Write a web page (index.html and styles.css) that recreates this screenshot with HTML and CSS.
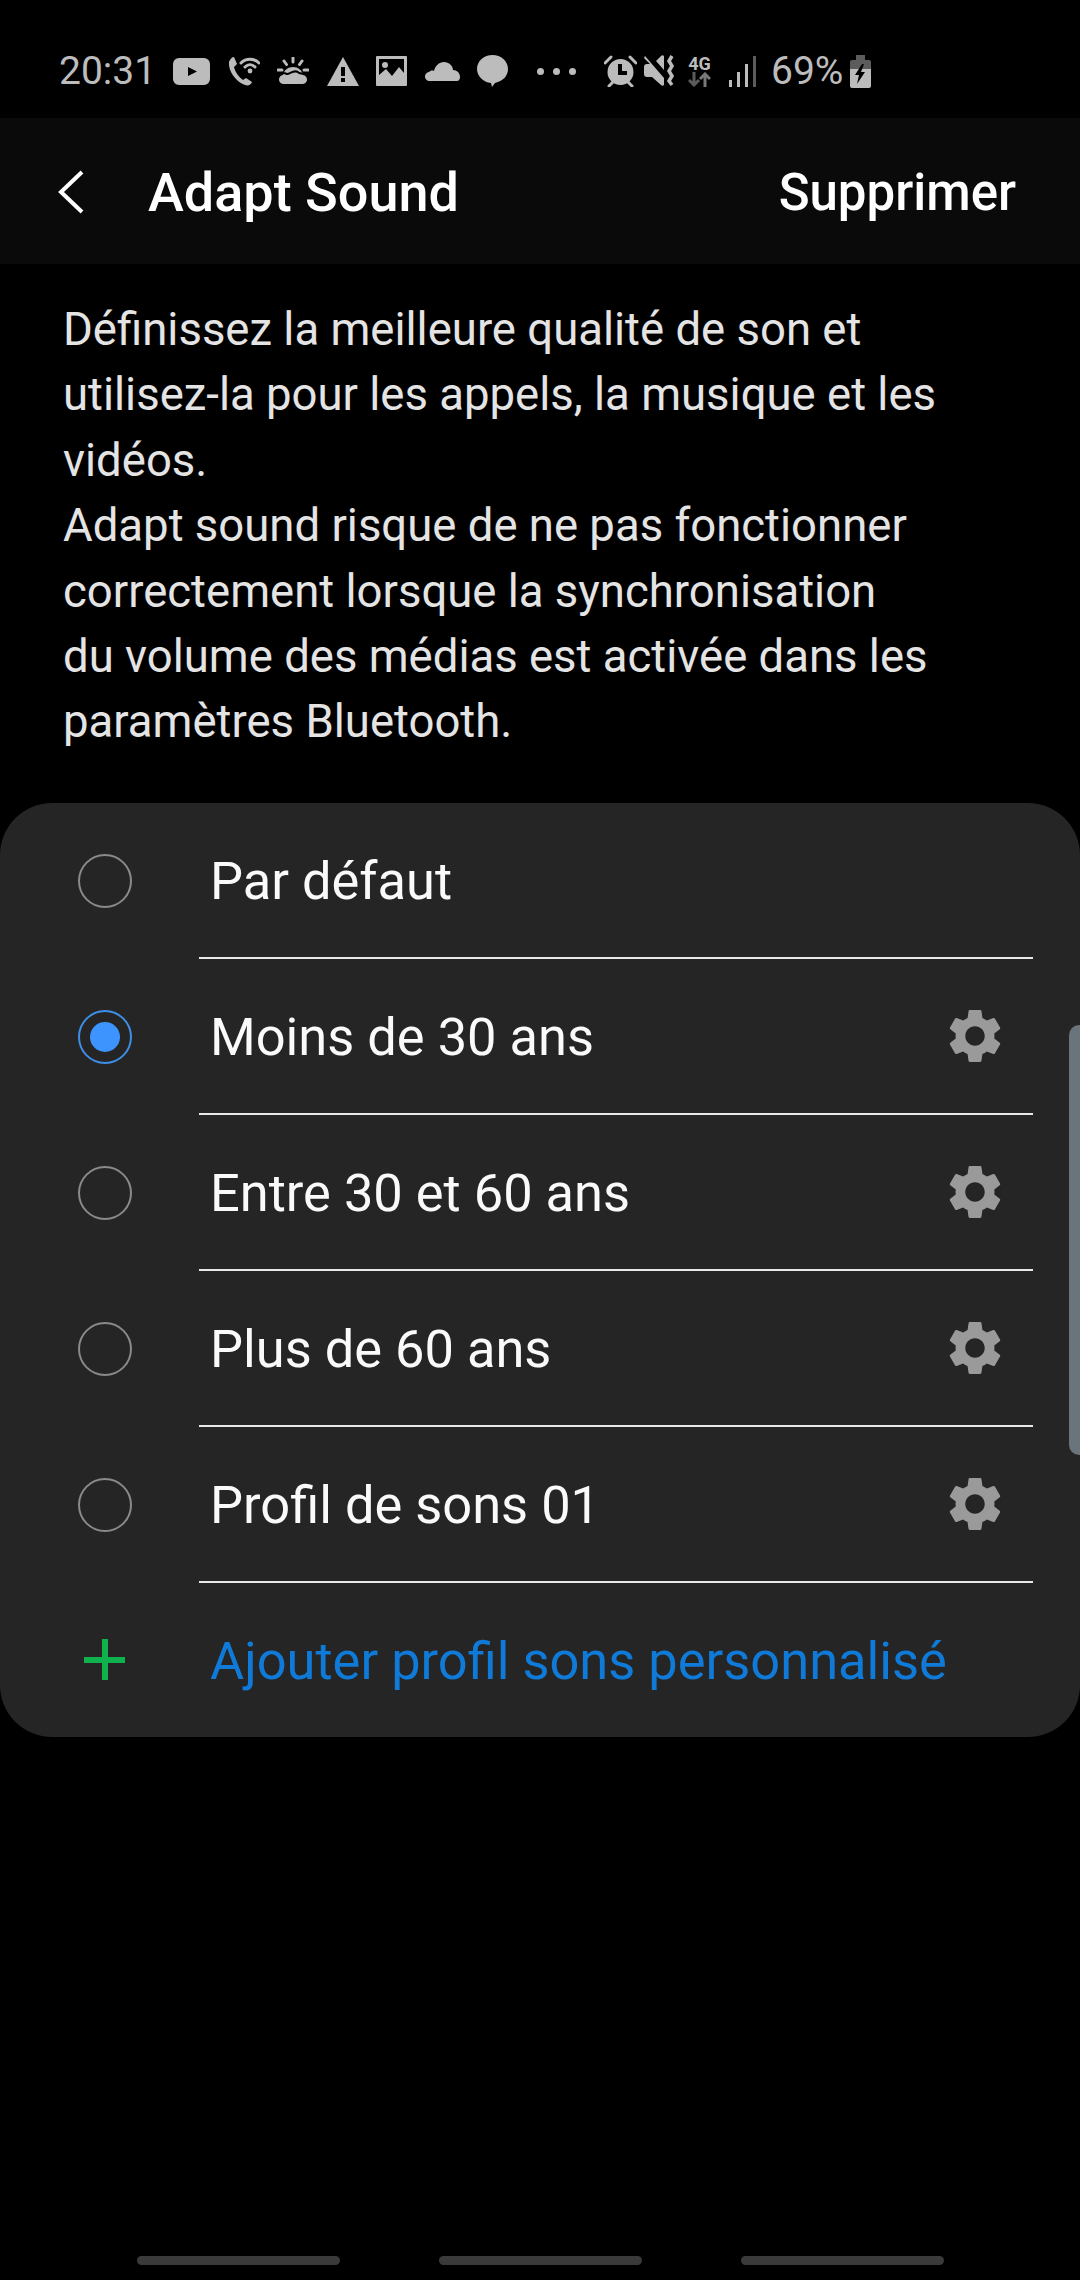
FILE: index.html
```html
<!DOCTYPE html>
<html>
  <head>
    <meta charset="utf-8">
    <title>Adapt Sound</title>
    <link rel="stylesheet" href="styles.css">
  </head>
  <body>
    <svg class="defs" width="0" height="0">
      <symbol id="gear" viewBox="2.6 2 18.8 20">
        <path d="M19.14 12.94c.04-.3.06-.61.06-.94 0-.32-.02-.64-.07-.94l2.03-1.58c.18-.14.23-.41.12-.61l-1.92-3.32c-.12-.22-.37-.29-.59-.22l-2.39.96c-.5-.38-1.03-.7-1.62-.94l-.36-2.54c-.04-.24-.24-.41-.48-.41h-3.84c-.24 0-.43.17-.47.41l-.36 2.54c-.59.24-1.13.57-1.62.94l-2.39-.96c-.22-.08-.47 0-.59.22L2.74 8.87c-.12.21-.08.47.12.61l2.03 1.58c-.05.3-.09.63-.09.94s.02.64.07.94l-2.03 1.58c-.18.14-.23.41-.12.61l1.92 3.32c.12.22.37.29.59.22l2.39-.96c.5.38 1.03.7 1.62.94l.36 2.54c.05.24.24.41.48.41h3.84c.24 0 .44-.17.47-.41l.36-2.54c.59-.24 1.13-.56 1.62-.94l2.39.96c.22.08.47 0 .59-.22l1.92-3.32c.12-.22.07-.47-.12-.61l-2.01-1.58zM12 15.6c-1.98 0-3.6-1.62-3.6-3.6s1.62-3.6 3.6-3.6 3.6 1.62 3.6 3.6-1.62 3.6-3.6 3.6z"/>
      </symbol>
    </svg>

    <div class="status-bar">
      <span class="status-time">20:31</span>
      <div class="status-left">
        <svg width="37" height="27" viewBox="0 0 37 27">
          <path fill-rule="evenodd" d="M6 0h25a6 6 0 0 1 6 6v15a6 6 0 0 1-6 6H6a6 6 0 0 1-6-6V6a6 6 0 0 1 6-6zM15 9v9l9-4.5z"/>
        </svg>
        <svg width="32" height="30" viewBox="0 0 32 30">
          <path d="M1 6c1-3 3-5 5-5l3 7-3 3c1 5 5 10 9 13l3-2 6 4c-1 3-4 4-7 3C8 26 0 15 1 6z"/>
          <g class="wave">
            <path d="M13 7c5-5 13-5 18 0"/>
            <path d="M17 11c3-3 7-3 10 0"/>
          </g>
          <circle cx="22" cy="15" r="2.4"/>
        </svg>
        <svg width="32" height="28" viewBox="0 0 32 28">
          <path d="M7 27a4.500 4.500 0 0 1-1-9c1-5 5-8 10-8s9 3 10 8a4.500 4.500 0 0 1-1 9z"/>
          <path class="notch" d="M1 17c5-2 7-1 9 0s8-6 12-1c3 1 6 1 9 1" />
          <g class="ray">
            <path d="M16 1v4M7 4l2.500 3.500M25 4l-2.500 3.500M1 13h4M27 13h4"/>
          </g>
        </svg>
        <svg width="32" height="29" viewBox="0 0 32 29">
          <path d="M16 0 32 29H0z"/>
          <rect class="cut" x="14" y="10" width="4" height="9"/>
          <rect class="cut" x="14" y="21" width="4" height="4"/>
        </svg>
        <svg width="31" height="30" viewBox="0 0 31 30">
          <path fill-rule="evenodd" d="M1 0h29a1 1 0 0 1 1 1v28a1 1 0 0 1-1 1H1a1 1 0 0 1-1-1V1a1 1 0 0 1 1-1zM3 3v16l7-6 6 7 7-9 5 6V3z"/>
          <circle cx="9" cy="9" r="3"/>
        </svg>
        <svg width="35" height="19" viewBox="0 0 35 19">
          <path d="M5 19a4.500 4.500 0 0 1-1-9c1-1 3-2 5-1 1-5 5-9 10-9 5 0 9 4 9 8 4 0 7 3 7 7 0 2-1 4-3 4z"/>
        </svg>
        <svg width="31" height="32" viewBox="0 0 31 32">
          <path d="M15.500 0C24 0 31 6 31 14c0 7-5 12-13 14l-3 4-1-4C6 27 0 21 0 14 0 6 7 0 15.500 0z"/>
        </svg>
      </div>
      <div class="status-dots">
        <i></i><i></i><i></i>
      </div>
      <div class="status-right">
        <svg class="ic-alarm" width="33" height="32" viewBox="0 0 33 32">
          <circle cx="16.500" cy="17" r="13"/>
          <path class="cut-line" d="M16 9v9h7"/>
          <g class="ray">
            <path d="M1 8l6-6M32 8l-6-6M5 31l4-4M28 31l-4-4"/>
          </g>
        </svg>
        <svg class="ic-mute" width="31" height="32" viewBox="0 0 31 32">
          <path d="M1 1l19 22v7c-1 1-2 1-3 0L8 22H3c-2 0-3-1-3-3v-7c0-2 1-3 3-3h3L0 3zM20 1v14l-8-9 5-5c1-1 2-1 3 0z"/>
          <path class="squiggle" d="M28 1l-3 5 3 5-3 5 3 5-3 5 3 4"/>
        </svg>
        <div class="net">
          <span class="net-label">4G</span>
          <svg width="23" height="15" viewBox="0 0 23 15">
            <path class="arrow-dim" d="M6 0v12M1 8l5 5 5-5"/>
            <path class="arrow-mid" d="M17 15V3M12 7l5-5 5 5"/>
          </svg>
        </div>
        <svg class="ic-signal" width="27" height="31" viewBox="0 0 27 31">
          <rect x="0" y="24" width="3" height="7"/>
          <rect x="8" y="16" width="3" height="15"/>
          <rect x="16" y="8" width="3" height="23"/>
          <rect class="dim" x="24" y="0" width="3" height="31"/>
        </svg>
        <span class="status-pct">69%</span>
        <svg class="ic-battery" width="21" height="33" viewBox="0 0 21 33">
          <path class="dim" d="M6 0h9v5h4a2 2 0 0 1 2 2v7H0V7a2 2 0 0 1 2-2h4z"/>
          <path d="M0 14h21v17a2 2 0 0 1-2 2H2a2 2 0 0 1-2-2z"/>
          <path class="cut" d="M12 9 5 20h4l-2 9 8-12h-4l3-8z"/>
        </svg>
      </div>
    </div>

    <header class="toolbar">
      <svg class="back" width="26" height="44" viewBox="0 0 26 44">
        <path d="M24 2 3 22l21 20"/>
      </svg>
      <h1 class="title">Adapt Sound</h1>
      <a href="#" class="action">Supprimer</a>
    </header>

    <section class="intro">
      Définissez la meilleure qualité de son et<br>
      utilisez-la pour les appels, la musique et les<br>
      vidéos.<br>
      Adapt sound risque de ne pas fonctionner<br>
      correctement lorsque la synchronisation<br>
      du volume des médias est activée dans les<br>
      paramètres Bluetooth.
    </section>

    <section class="card">
      <div class="row">
        <div class="row-lead"><span class="radio"></span></div>
        <div class="row-body">
          <span class="row-label">Par défaut</span>
        </div>
      </div>
      <div class="row">
        <div class="row-lead"><span class="radio checked"></span></div>
        <div class="row-body">
          <span class="row-label">Moins de 30 ans</span>
          <svg class="gear"><use href="#gear"/></svg>
        </div>
      </div>
      <div class="row">
        <div class="row-lead"><span class="radio"></span></div>
        <div class="row-body">
          <span class="row-label">Entre 30 et 60 ans</span>
          <svg class="gear"><use href="#gear"/></svg>
        </div>
      </div>
      <div class="row">
        <div class="row-lead"><span class="radio"></span></div>
        <div class="row-body">
          <span class="row-label">Plus de 60 ans</span>
          <svg class="gear"><use href="#gear"/></svg>
        </div>
      </div>
      <div class="row">
        <div class="row-lead"><span class="radio"></span></div>
        <div class="row-body">
          <span class="row-label">Profil de sons 01</span>
          <svg class="gear"><use href="#gear"/></svg>
        </div>
      </div>
      <div class="row row-add">
        <div class="row-lead"><span class="plus"></span></div>
        <div class="row-body">
          <span class="row-label">Ajouter profil sons personnalisé</span>
        </div>
      </div>
    </section>

    <div class="scrollbar"></div>

    <nav class="nav-hints">
      <span class="nav-hint"></span>
      <span class="nav-hint"></span>
      <span class="nav-hint"></span>
    </nav>
  </body>
</html>
```

FILE: styles.css
```css
html {
  box-sizing: border-box;
  background-color: #000;
}

*, *:before, *:after {
  box-sizing: inherit;
}

body {
  position: relative;
  display: flex;
  flex-direction: column;
  margin: 0;
  height: 2280px;
  overflow: hidden;
  font-family: Roboto, sans-serif;
  color: #fafafa;
}

a {
  color: inherit;
  text-decoration: none;
}

.defs {
  position: absolute;
}

/* status bar */
.status-bar {
  display: flex;
  align-items: center;
  flex: none;
  height: 118px;
  padding: 24px 0 0 59px;
  color: #bcbcbc;
  fill: #bcbcbc;
}

.status-time {
  width: 91px;
  font-size: 39px;
  letter-spacing: 0;
}

.status-left {
  display: flex;
  align-items: center;
  gap: 17.5px;
  margin-left: 23px;
}

.status-dots {
  display: flex;
  gap: 9px;
  margin-left: 29px;
}

.status-dots i {
  width: 7px;
  height: 7px;
  border-radius: 50%;
  background-color: #bcbcbc;
}

.status-right {
  display: flex;
  align-items: center;
  margin-left: 28px;
}

.status-bar .wave path,
.status-bar .ray path {
  fill: none;
  stroke: #bcbcbc;
  stroke-width: 3;
  stroke-linecap: round;
}

.status-bar .notch {
  fill: none;
  stroke: #000;
  stroke-width: 2;
}

.status-bar .cut {
  fill: #000;
}

.status-bar .cut-line {
  fill: none;
  stroke: #000;
  stroke-width: 4;
}

.status-bar .squiggle {
  fill: none;
  stroke: #bcbcbc;
  stroke-width: 3.5;
}

.status-bar .dim {
  fill: #5c5c5c;
}

.ic-mute {
  margin-left: 7px;
}

.net {
  display: flex;
  flex-direction: column;
  align-items: center;
  width: 23px;
  margin-left: 13px;
}

.net-label {
  font-size: 18px;
  font-weight: 700;
  line-height: 17px;
}

.net svg {
  display: block;
}

.net path {
  fill: none;
  stroke-width: 3;
}

.arrow-dim {
  stroke: #5c5c5c;
}

.arrow-mid {
  stroke: #787878;
}

.ic-signal {
  margin-left: 18px;
}

.status-pct {
  margin-left: 15px;
  width: 70px;
  font-size: 39px;
}

.ic-battery {
  margin-left: 9px;
}

/* toolbar */
.toolbar {
  display: flex;
  align-items: center;
  flex: none;
  height: 146px;
  padding: 2px 64px 0 58px;
  background-color: #0a0a0a;
  color: #fff;
}

.back {
  fill: none;
  stroke: #fff;
  stroke-width: 4;
}

.title {
  flex: 1;
  margin: 0 0 0 64px;
  font-size: 54px;
  font-weight: 500;
}

.action {
  font-size: 51px;
  font-weight: 500;
}

/* description */
.intro {
  flex: none;
  padding: 33px 30px 48px 63px;
  font-size: 45.5px;
  line-height: 65.4px;
  color: #e4e4e4;
}

/* profile list */
.card {
  flex: none;
  border-radius: 52px;
  background-color: #252525;
}

.row {
  display: flex;
  height: 156px;
}

.row-add {
  height: 154px;
}

.row-lead {
  display: flex;
  align-items: center;
  flex: none;
  width: 199px;
  padding-left: 78px;
}

.radio {
  display: flex;
  align-items: center;
  justify-content: center;
  width: 54px;
  height: 54px;
  border: 2px solid #8a8a8a;
  border-radius: 50%;
}

.radio.checked {
  border-color: #3e8fe8;
}

.radio.checked:after {
  content: "";
  width: 30px;
  height: 30px;
  border-radius: 50%;
  background-color: #3e94ff;
}

.plus {
  position: relative;
  display: block;
  width: 41px;
  height: 41px;
  margin-left: 6px;
  background:
    linear-gradient(#10b24e, #10b24e) center / 41px 6px no-repeat,
    linear-gradient(#10b24e, #10b24e) center / 6px 41px no-repeat;
}

.row-body {
  display: flex;
  align-items: center;
  justify-content: space-between;
  flex: 1;
  margin-right: 47px;
  padding: 0 32px 0 11px;
  border-bottom: 2px solid #e8e8e8;
}

.row-add .row-body {
  border-bottom: 0;
}

.row-label {
  padding-top: 2px;
  font-size: 52.4px;
}

.row-add .row-label {
  color: #0f7ad8;
}

.gear {
  width: 52px;
  height: 54px;
  fill: #9a9a9a;
}

.scrollbar {
  position: absolute;
  top: 1025px;
  right: 0;
  width: 11px;
  height: 430px;
  border-radius: 10px 0 0 10px;
  background-color: #69757a;
}

/* navigation hints */
.nav-hints {
  display: flex;
  justify-content: space-between;
  margin-top: auto;
  padding: 0 136px 15px 137px;
}

.nav-hint {
  width: 203px;
  height: 9px;
  border-radius: 5px;
  background-color: #3a3a3a;
}
```
